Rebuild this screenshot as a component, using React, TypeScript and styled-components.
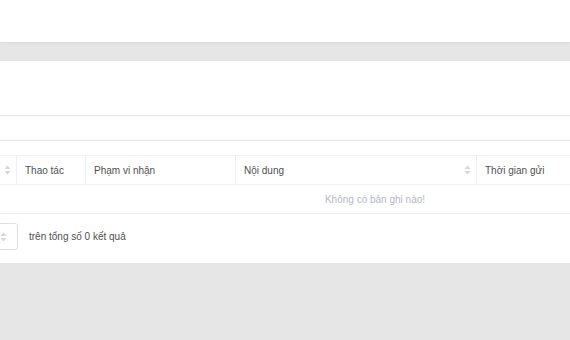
import React from "react";
import styled, { createGlobalStyle } from "styled-components";

const GlobalStyle = createGlobalStyle`
    html, body {
        margin: 0;
        background: #e6e6e6;
        font-family: "Liberation Sans", Arial, sans-serif;
        overflow: hidden;
    }
`;

type Column = {
    title: string;
    sortable?: boolean;
};

const columns: Column[] = [
    { title: "", sortable: true },
    { title: "Thao tác" },
    { title: "Phạm vi nhận" },
    { title: "Nội dung", sortable: true },
    { title: "Thời gian gửi" },
];

const SortIcon = () => (
    <svg width="7" height="10" viewBox="0 0 7 10">
        <path d="M3.5 0.5 L6.5 4 H0.5 Z" fill="#d3d6dc" />
        <path d="M3.5 9.5 L6.5 6 H0.5 Z" fill="#d3d6dc" />
    </svg>
);

const App = () => {
    return <Page>
        <GlobalStyle />
        <TopBar />
        <Card>
            <FilterArea />
            <TabArea />
            <TableWrap>
                <Table>
                    <HeaderRow>
                        {columns.map((c, i) => (
                            <HeaderCell key={i} $last={i === columns.length - 1}>
                                <span>{c.title}</span>
                                {c.sortable && <SortIcon />}
                            </HeaderCell>
                        ))}
                    </HeaderRow>
                    <EmptyRow>Không có bản ghi nào!</EmptyRow>
                </Table>
            </TableWrap>
            <Footer>
                <PageSize>
                    <SortIcon />
                </PageSize>
                <Total>trên tổng số 0 kết quả</Total>
            </Footer>
        </Card>
    </Page>
}

export default App;

const Page = styled.div`
    display: flex;
    flex-direction: column;
    gap: 19px;
`

const TopBar = styled.div`
    height: 42px;
    background: #fff;
    box-shadow: 0 1px 2px rgba(0, 0, 0, 0.06);
`

const Card = styled.div`
    background: #fff;
    overflow: hidden;
    box-shadow: 0 2px 5px rgba(0, 0, 0, 0.09);
`

const FilterArea = styled.div`
    height: 54px;
    border-bottom: 1px solid #e6e6e6;
`

const TabArea = styled.div`
    height: 24px;
    border-bottom: 1px solid #e6e6e6;
`

const TableWrap = styled.div`
    padding-top: 14px;
`

const Table = styled.div`
    margin-left: -20px;
    width: 790px;
    font-size: 10px;
`

const HeaderRow = styled.div`
    display: grid;
    grid-template-columns: 37px 69px 150px 241px 293px;
    height: 28px;
    border-top: 1px solid #eef0f4;
    border-bottom: 1px solid #eef0f4;
    color: #4f4f4f;
`

const HeaderCell = styled.div<{ $last?: boolean }>`
    display: flex;
    align-items: center;
    justify-content: space-between;
    padding: 0 5px 0 8px;
    border-right: ${p => p.$last ? "none" : "1px solid #eceef3"};
`

const EmptyRow = styled.div`
    height: 28px;
    display: flex;
    align-items: center;
    justify-content: center;
    color: #b4b8c2;
    border-bottom: 1px solid #eef0f4;
`

const Footer = styled.div`
    display: flex;
    align-items: center;
    gap: 11px;
    padding: 9px 0 13px;
`

const PageSize = styled.div`
    box-sizing: border-box;
    margin-left: -40px;
    width: 58px;
    height: 27px;
    border: 1px solid #dcdfe6;
    border-radius: 3px;
    display: flex;
    align-items: center;
    justify-content: flex-end;
    padding-right: 10px;
`

const Total = styled.span`
    font-size: 10px;
    color: #4f4f4f;
`
